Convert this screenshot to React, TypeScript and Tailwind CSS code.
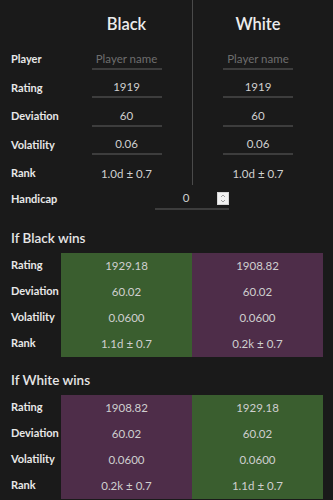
const font = { fontFamily: "Lato, 'Noto Sans', sans-serif" };

const GREEN = "bg-[#3a5e2f]";
const PURPLE = "bg-[#4e2d49]";

const topRows = [
  { label: "Player", black: "", white: "", placeholder: true, input: true },
  { label: "Rating", black: "1919", white: "1919", input: true },
  { label: "Deviation", black: "60", white: "60", input: true },
  { label: "Volatility", black: "0.06", white: "0.06", input: true },
  { label: "Rank", black: "1.0d ± 0.7", white: "1.0d ± 0.7", input: false },
];

function Field({ value, placeholder, input }: { value: string; placeholder?: boolean; input: boolean }) {
  if (!input) return <span className="text-[11.5px] text-[#d0d0d0]">{value}</span>;
  return (
    <div className="mt-[2px] flex h-[19px] w-[70px] items-center justify-center border-b-2 border-[#3d3d3d] pb-[2px]">
      {placeholder ? (
        <span className="text-[11.5px] text-[#6e6e6e]">Player name</span>
      ) : (
        <span className="text-[11.5px] text-[#d0d0d0]">{value}</span>
      )}
    </div>
  );
}

function Outcome({ title, rows, left, right }: { title: string; rows: [string, string, string][]; left: string; right: string }) {
  return (
    <div>
      <div className="flex h-[28px] items-center pl-[11px] text-[13.5px] font-semibold text-[#e6e6e6]">{title}</div>
      <div className="grid grid-cols-[61px_131px_131px]">
        {rows.map(([label, a, b]) => (
          <div key={label} className="contents">
            <div className="flex h-[26px] items-center pl-[11px] text-[11px] font-bold text-[#e8e8e8]">{label}</div>
            <div className={`flex h-[26px] items-center justify-center text-[11.5px] text-[#cfcfcf] ${left}`}>{a}</div>
            <div className={`flex h-[26px] items-center justify-center text-[11.5px] text-[#cfcfcf] ${right}`}>{b}</div>
          </div>
        ))}
      </div>
    </div>
  );
}

export default function App() {
  return (
    <div className="h-[500px] w-[333px] overflow-hidden bg-[#1a1a1a]" style={font}>
      <div className="grid grid-cols-[61px_131px_1px_130px]">
        <div className="h-[45px]" />
        <div className="flex h-[45px] items-center justify-center pt-[3px] text-[16.5px] font-semibold text-[#ececec]">Black</div>
        <div className="row-span-6 h-[185px] bg-[#4a4a4a]" />
        <div className="flex h-[45px] items-center justify-center pt-[3px] text-[16.5px] font-semibold text-[#ececec]">White</div>
        {topRows.map((r) => (
          <div key={r.label} className="contents">
            <div className="flex h-[28.5px] items-center pl-[11px] text-[11px] font-bold text-[#e8e8e8]">{r.label}</div>
            <div className="flex h-[28.5px] items-center justify-center">
              <Field value={r.black} placeholder={r.placeholder} input={r.input} />
            </div>
            <div className="flex h-[28.5px] items-center justify-center">
              <Field value={r.white} placeholder={r.placeholder} input={r.input} />
            </div>
          </div>
        ))}
      </div>

      <div className="flex h-[24px] items-center">
        <div className="w-[155px] pl-[11px] text-[11px] font-bold text-[#e8e8e8]">Handicap</div>
        <div className="flex h-[21px] w-[74px] items-center border-b-2 border-[#3d3d3d] pb-[1px]">
          <span className="w-[62px] text-center text-[11.5px] text-[#d0d0d0]">0</span>
          <svg width="12" height="13" viewBox="0 0 12 13" className="shrink-0">
            <rect x="0" y="0" width="12" height="13" fill="#f2f2f2" />
            <rect x="0.5" y="0.5" width="11" height="12" fill="none" stroke="#d6d6d6" />
            <path d="M4 5 L6 3 L8 5" fill="none" stroke="#a0a0a0" strokeWidth="1" />
            <path d="M4 8 L6 10 L8 8" fill="none" stroke="#a0a0a0" strokeWidth="1" />
          </svg>
        </div>
      </div>

      <div className="mt-[13px]">
        <Outcome
          title="If Black wins"
          left={GREEN}
          right={PURPLE}
          rows={[
            ["Rating", "1929.18", "1908.82"],
            ["Deviation", "60.02", "60.02"],
            ["Volatility", "0.0600", "0.0600"],
            ["Rank", "1.1d ± 0.7", "0.2k ± 0.7"],
          ]}
        />
      </div>
      <div className="mt-[10px]">
        <Outcome
          title="If White wins"
          left={PURPLE}
          right={GREEN}
          rows={[
            ["Rating", "1908.82", "1929.18"],
            ["Deviation", "60.02", "60.02"],
            ["Volatility", "0.0600", "0.0600"],
            ["Rank", "0.2k ± 0.7", "1.1d ± 0.7"],
          ]}
        />
      </div>
    </div>
  );
}
